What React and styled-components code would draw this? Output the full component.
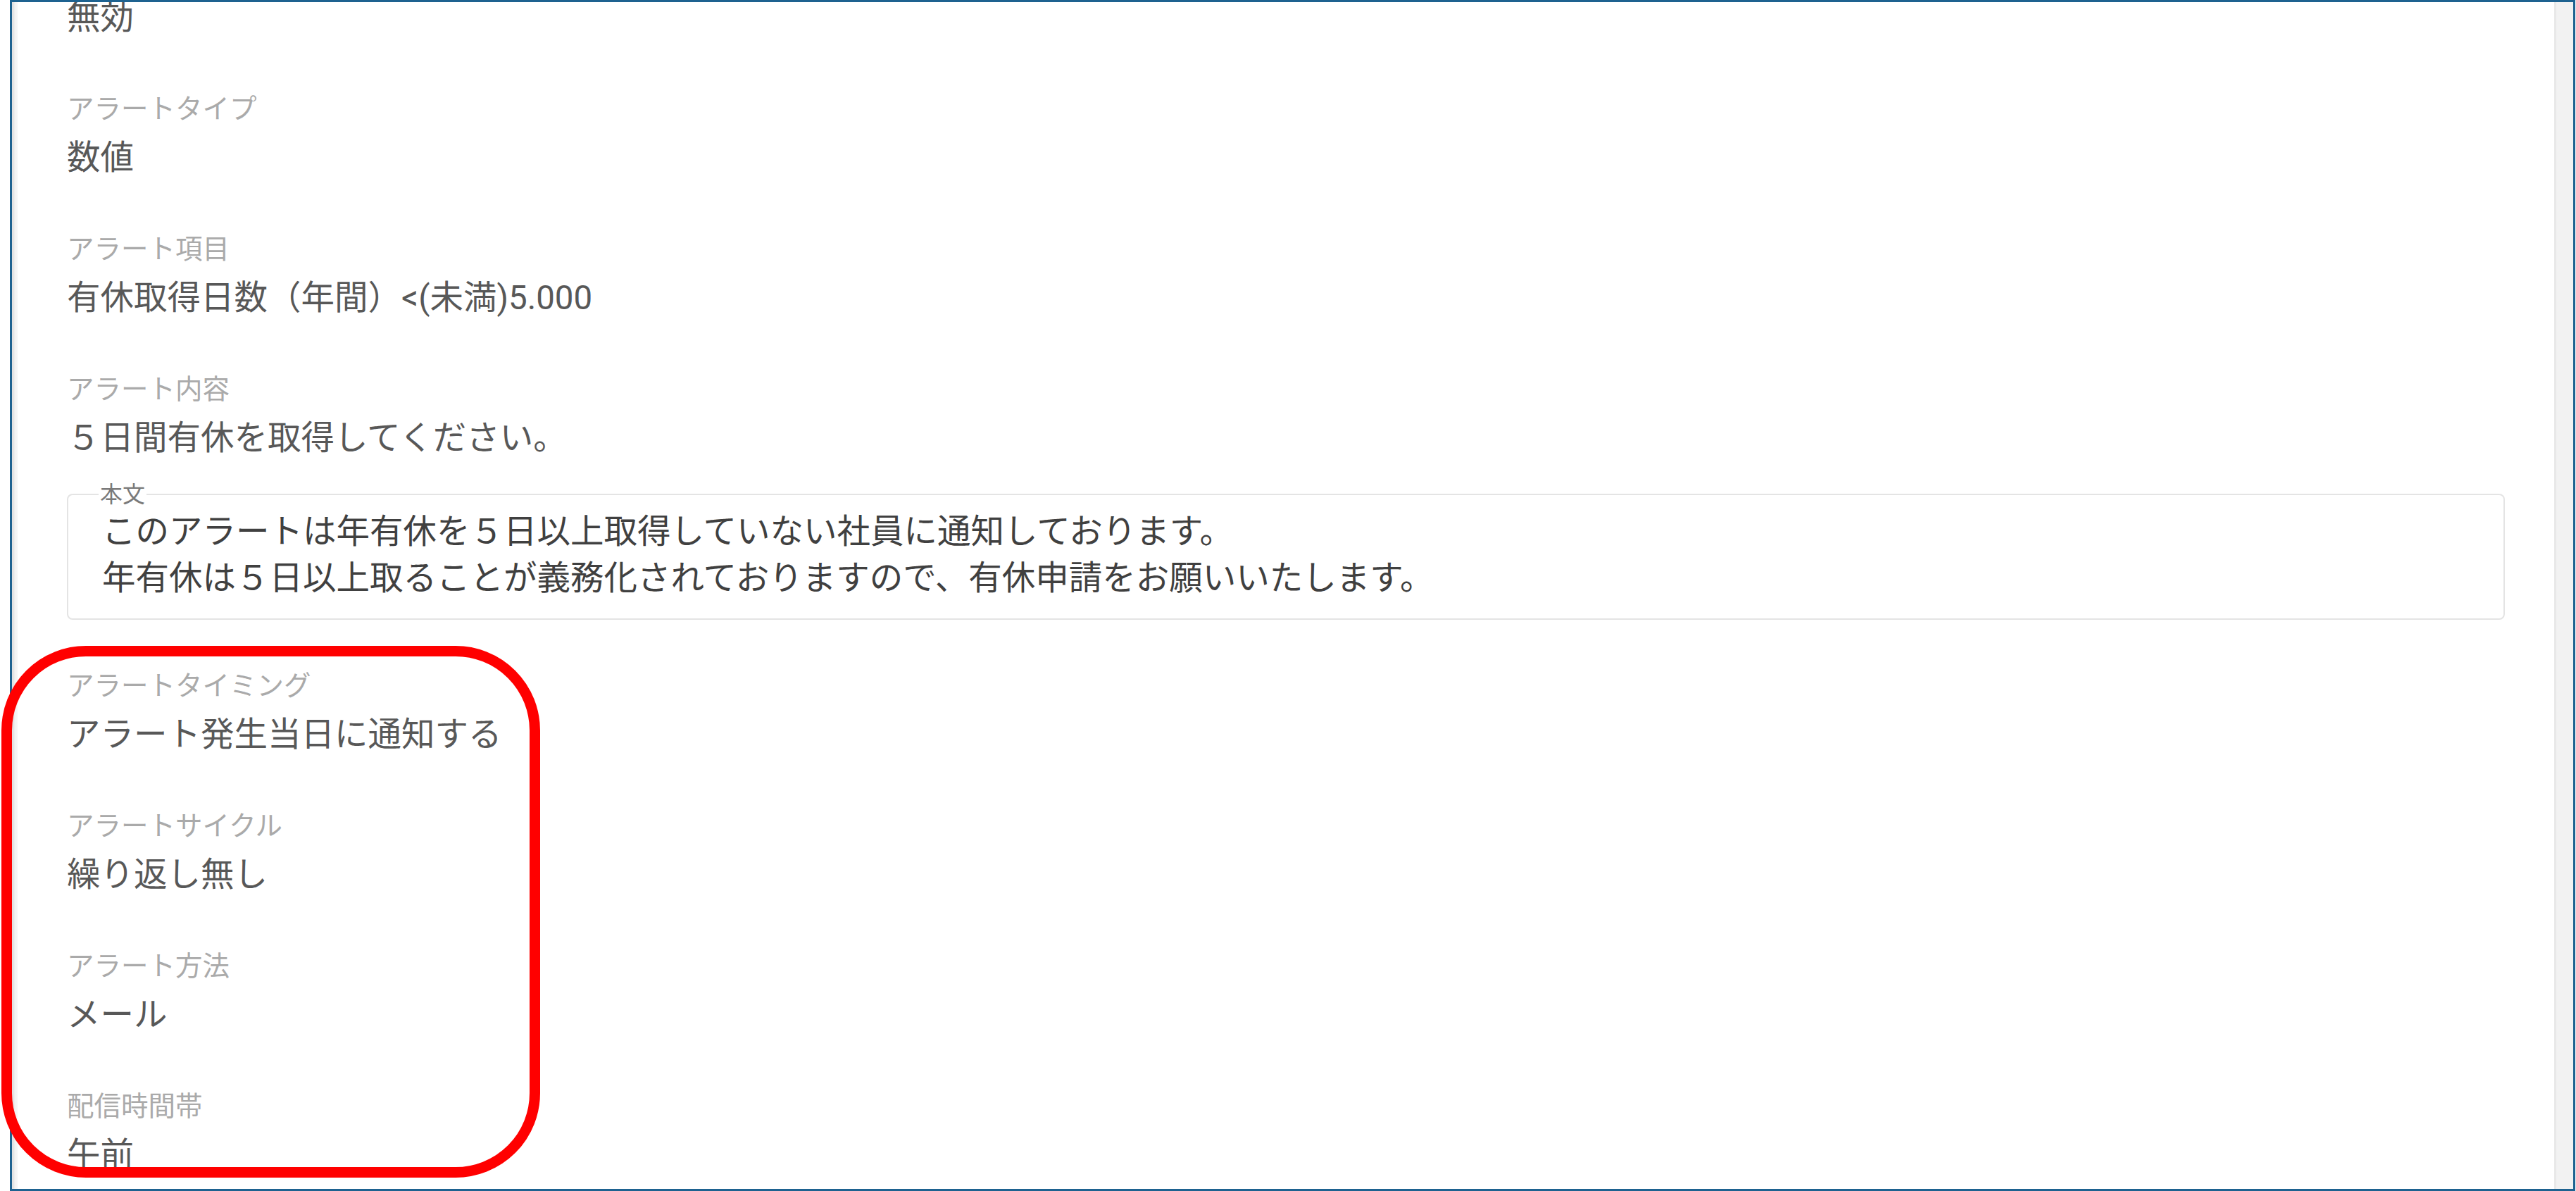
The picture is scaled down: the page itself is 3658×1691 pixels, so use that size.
import React, { useLayoutEffect, useRef } from 'react';
import styled, { createGlobalStyle } from 'styled-components';

const GlobalStyle = createGlobalStyle`
  html, body {
    margin: 0;
    padding: 0;
    background: #fff;
  }
  body {
    font-family: "Roboto", "Noto Sans CJK JP", "Noto Sans", sans-serif;
  }
  * { box-sizing: border-box; }
`;

const Page = styled.div`
  position: relative;
  width: 3658px;
  height: 1691px;
  background: #fff;
  overflow: hidden;
`;

const Frame = styled.div`
  margin-left: 14px;
  width: 3643px;
  height: 1691px;
  border: 3px solid #1e6290;
  display: flex;
  background: #fff;
`;

const LeftEdge = styled.div`
  width: 8px;
  flex: none;
  background: linear-gradient(to right, #e0e0e0 0, #e6e6e6 3px, #f2f2f2 4px, #f6f6f6 100%);
`;

const ScrollArea = styled.div`
  flex: 1;
  overflow: hidden;
  padding: 40px 70px 200px;
`;

const ScrollTrack = styled.div`
  width: 27px;
  flex: none;
  background: #f2f2f2;
  border-left: 3px solid #e8e8e8;
`;

const Field = styled.div`
  margin-bottom: 59px;
`;

const Label = styled.div`
  padding-top: 5px;
  font-size: 38.5px;
  line-height: 60px;
  color: #aaaaaa;
  white-space: nowrap;
`;

const Value = styled.div`
  margin-top: 3px;
  font-size: 47.5px;
  line-height: 72px;
  color: #585858;
  white-space: nowrap;
`;

const BodyBox = styled.fieldset`
  margin: 24px 0 3px;
  padding: 0 48px 24px;
  border: 2px solid #e4e4e4;
  border-radius: 8px;
  min-width: 0;
`;

const BodyLegend = styled.legend`
  margin-left: -5px;
  padding: 0 2px;
  font-size: 32px;
  line-height: 40px;
  color: #7a7a7a;
`;

const BodyLine = styled.div`
  font-size: 47.5px;
  line-height: 66px;
  color: #404040;
  white-space: nowrap;
`;

const Highlight = styled.div`
  position: absolute;
  left: 2px;
  top: 917px;
  width: 765px;
  height: 755px;
  border: 15px solid #ff0000;
  border-radius: 120px;
  pointer-events: none;
`;

const fields = [
  { label: 'アラート状態', value: '無効' },
  { label: 'アラートタイプ', value: '数値' },
  { label: 'アラート項目', value: '有休取得日数（年間）<(未満)5.000' },
  {
    label: 'アラート内容',
    value: '５日間有休を取得してください。',
    body: [
      'このアラートは年有休を５日以上取得していない社員に通知しております。',
      '年有休は５日以上取ることが義務化されておりますので、有休申請をお願いいたします。',
    ],
  },
  { label: 'アラートタイミング', value: 'アラート発生当日に通知する' },
  { label: 'アラートサイクル', value: '繰り返し無し' },
  { label: 'アラート方法', value: 'メール' },
  { label: '配信時間帯', value: '午前' },
];

const App = () => {
  const scrollRef = useRef(null);

  useLayoutEffect(() => {
    if (scrollRef.current) scrollRef.current.scrollTop = 122;
  }, []);

  return (
    <Page>
      <GlobalStyle />
      <Frame>
        <LeftEdge />
        <ScrollArea ref={scrollRef}>
          {fields.map((f) => (
            <Field key={f.label}>
              <Label>{f.label}</Label>
              <Value>{f.value}</Value>
              {f.body && (
                <BodyBox>
                  <BodyLegend>本文</BodyLegend>
                  {f.body.map((line) => (
                    <BodyLine key={line}>{line}</BodyLine>
                  ))}
                </BodyBox>
              )}
            </Field>
          ))}
        </ScrollArea>
        <ScrollTrack />
      </Frame>
      <Highlight />
    </Page>
  );
};

export default App;
